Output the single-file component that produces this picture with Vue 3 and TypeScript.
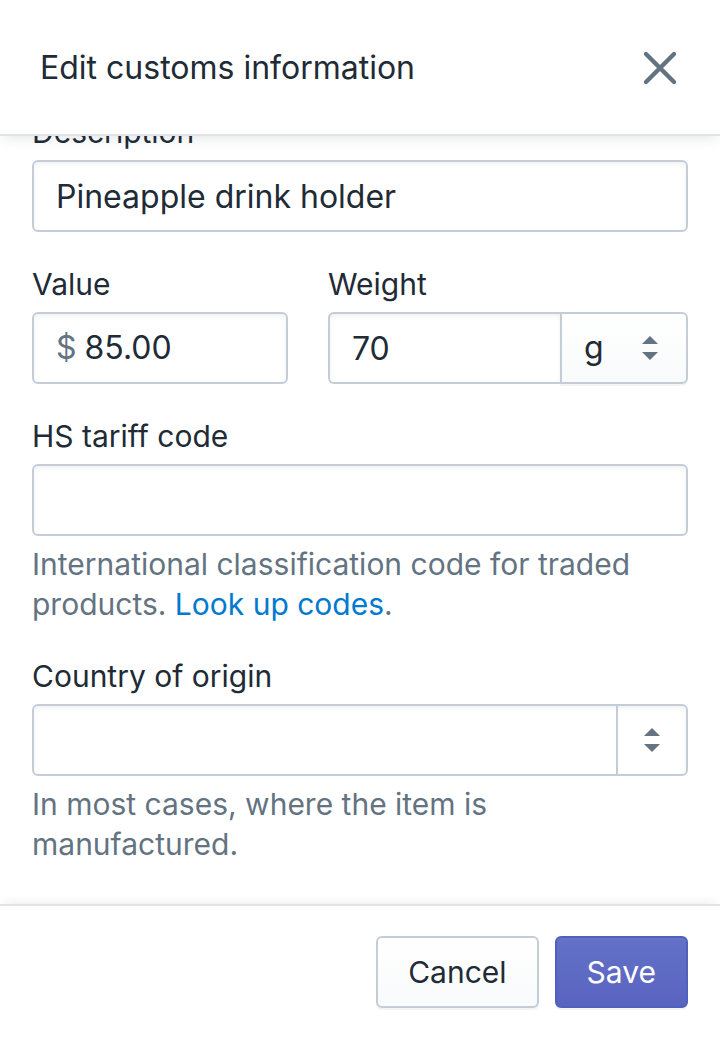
<script setup lang="ts">
import { onMounted, ref } from 'vue'

const description = ref('Pineapple drink holder')
const value = ref('85.00')
const weight = ref('70')
const unit = ref('g')
const tariffCode = ref('')
const country = ref('')

const units: string[] = ['g', 'kg', 'oz', 'lb']
const countries: string[] = ['Canada', 'China', 'Mexico', 'United States']

const body = ref<HTMLElement | null>(null)

onMounted(() => {
  if (body.value) body.value.scrollTop = body.value.scrollHeight
})
</script>

<template>
  <form class="modal" role="dialog" aria-labelledby="modal-title" @submit.prevent>
    <header class="header">
      <h1 id="modal-title" class="title">Edit customs information</h1>
      <button class="close" type="button" aria-label="Close">
        <svg viewBox="0 0 40 40" width="40" height="40" aria-hidden="true">
          <path d="M6 6 34 34M34 6 6 34" fill="none" stroke="currentColor" stroke-width="4.4" stroke-linecap="round" />
        </svg>
      </button>
    </header>

    <div ref="body" class="body">
      <div class="field">
        <label class="label" for="description">Description</label>
        <input id="description" v-model="description" class="box" type="text" />
      </div>

      <div class="row">
        <div class="field">
          <label class="label" for="value">Value</label>
          <div class="box prefixed">
            <span class="prefix">$</span>
            <input id="value" v-model="value" class="bare" type="text" inputmode="decimal" />
          </div>
        </div>
        <div class="field">
          <label class="label" for="weight">Weight</label>
          <div class="joined">
            <input id="weight" v-model="weight" class="box amount" type="text" inputmode="decimal" />
            <div class="picker unit">
              <select v-model="unit" class="box unit-select" aria-label="Weight unit">
                <option v-for="u in units" :key="u" :value="u">{{ u }}</option>
              </select>
              <span class="arrows">
                <svg viewBox="0 0 16 24" width="16" height="24" aria-hidden="true">
                  <path d="M0 8 8 0 16 8ZM0 16H16L8 24Z" fill="currentColor" />
                </svg>
              </span>
            </div>
          </div>
        </div>
      </div>

      <div class="field">
        <label class="label" for="tariff">HS tariff code</label>
        <input id="tariff" v-model="tariffCode" class="box" type="text" aria-describedby="tariff-help" />
        <p id="tariff-help" class="help">
          International classification code for traded products.
          <a class="link" href="#codes">Look up codes</a>.
        </p>
      </div>

      <div class="field">
        <label class="label" for="country">Country of origin</label>
        <div class="picker">
          <select id="country" v-model="country" class="box" aria-describedby="country-help">
            <option value=""></option>
            <option v-for="c in countries" :key="c" :value="c">{{ c }}</option>
          </select>
          <span class="arrows divided">
            <svg viewBox="0 0 16 24" width="16" height="24" aria-hidden="true">
              <path d="M0 8 8 0 16 8ZM0 16H16L8 24Z" fill="currentColor" />
            </svg>
          </span>
        </div>
        <p id="country-help" class="help">In most cases, where the item is manufactured.</p>
      </div>
    </div>

    <footer class="footer">
      <button class="button" type="button">Cancel</button>
      <button class="button primary" type="submit">Save</button>
    </footer>
  </form>
</template>

<style>
body {
  margin: 0;
}
</style>

<style scoped>
.modal,
.modal * {
  box-sizing: border-box;
}

.modal {
  display: flex;
  flex-direction: column;
  height: 100vh;
  background: #fff;
  color: #212b36;
  font-family: Inter, "Liberation Sans", sans-serif;
  font-size: 30px;
  line-height: 40px;
}

.header {
  position: relative;
  z-index: 1;
  display: flex;
  align-items: center;
  justify-content: space-between;
  padding: 48px 40px 46px;
  border-bottom: 2px solid #dfe3e8;
  background: #fff;
  box-shadow: 0 6px 12px -4px rgba(33, 43, 54, 0.12);
}

.title {
  margin: 0;
  font-size: 32px;
  font-weight: 400;
  line-height: 40px;
}

.close {
  display: flex;
  padding: 0;
  border: 0;
  background: none;
  color: #637381;
  cursor: pointer;
}

.body {
  flex: 1;
  min-height: 0;
  display: flex;
  flex-direction: column;
  gap: 32px;
  padding: 40px 32px;
  overflow-y: auto;
  scrollbar-width: none;
}

.row {
  display: grid;
  grid-template-columns: 32fr 45fr;
  gap: 40px;
}

.field {
  display: flex;
  flex-direction: column;
  gap: 8px;
  min-width: 0;
}

.box {
  width: 100%;
  height: 72px;
  padding: 0 22px;
  border: 2px solid #c4cdd5;
  border-radius: 6px;
  background: #fff;
  box-shadow: inset 0 2px 4px rgba(99, 115, 129, 0.1);
  color: #212b36;
  font: inherit;
  font-size: 32px;
  appearance: none;
}

.prefixed {
  display: flex;
  align-items: center;
  gap: 8px;
}

.prefix {
  color: #637381;
}

.bare {
  flex: 1;
  min-width: 0;
  padding: 0;
  border: 0;
  outline: 0;
  background: none;
  color: inherit;
  font: inherit;
}

.joined {
  display: flex;
}

.amount {
  flex: 1;
  min-width: 0;
  border-right: 0;
  border-radius: 6px 0 0 6px;
}

.picker {
  position: relative;
}

.unit {
  flex: 0 0 128px;
}

.unit-select {
  border-radius: 0 6px 6px 0;
  background: linear-gradient(#fff, #f9fafb);
  box-shadow: 0 2px 0 rgba(33, 43, 54, 0.05);
}

.arrows {
  position: absolute;
  top: 0;
  right: 2px;
  bottom: 0;
  display: flex;
  align-items: center;
  justify-content: center;
  width: 72px;
  color: #637381;
  pointer-events: none;
}

.divided {
  top: 2px;
  bottom: 2px;
  width: 70px;
  border-left: 2px solid #c4cdd5;
}

.help {
  margin: 0;
  color: #637381;
}

.link {
  color: #007ace;
  text-decoration: none;
}

.footer {
  position: relative;
  z-index: 1;
  display: flex;
  justify-content: flex-end;
  gap: 16px;
  padding: 30px 32px 32px;
  border-top: 2px solid #dfe3e8;
  background: #fff;
  box-shadow: 0 -4px 10px -4px rgba(33, 43, 54, 0.1);
}

.button {
  height: 72px;
  padding: 0 30px;
  border: 2px solid #c4cdd5;
  border-radius: 6px;
  background: linear-gradient(#fff, #f9fafb);
  box-shadow: 0 2px 0 rgba(33, 43, 54, 0.05);
  color: #212b36;
  font: inherit;
  cursor: pointer;
}

.primary {
  border-color: #5060bb;
  background: linear-gradient(#6371c7, #5964c0);
  box-shadow: inset 0 2px 0 #6774c8, 0 2px 0 rgba(33, 43, 54, 0.05);
  color: #fff;
}
</style>
